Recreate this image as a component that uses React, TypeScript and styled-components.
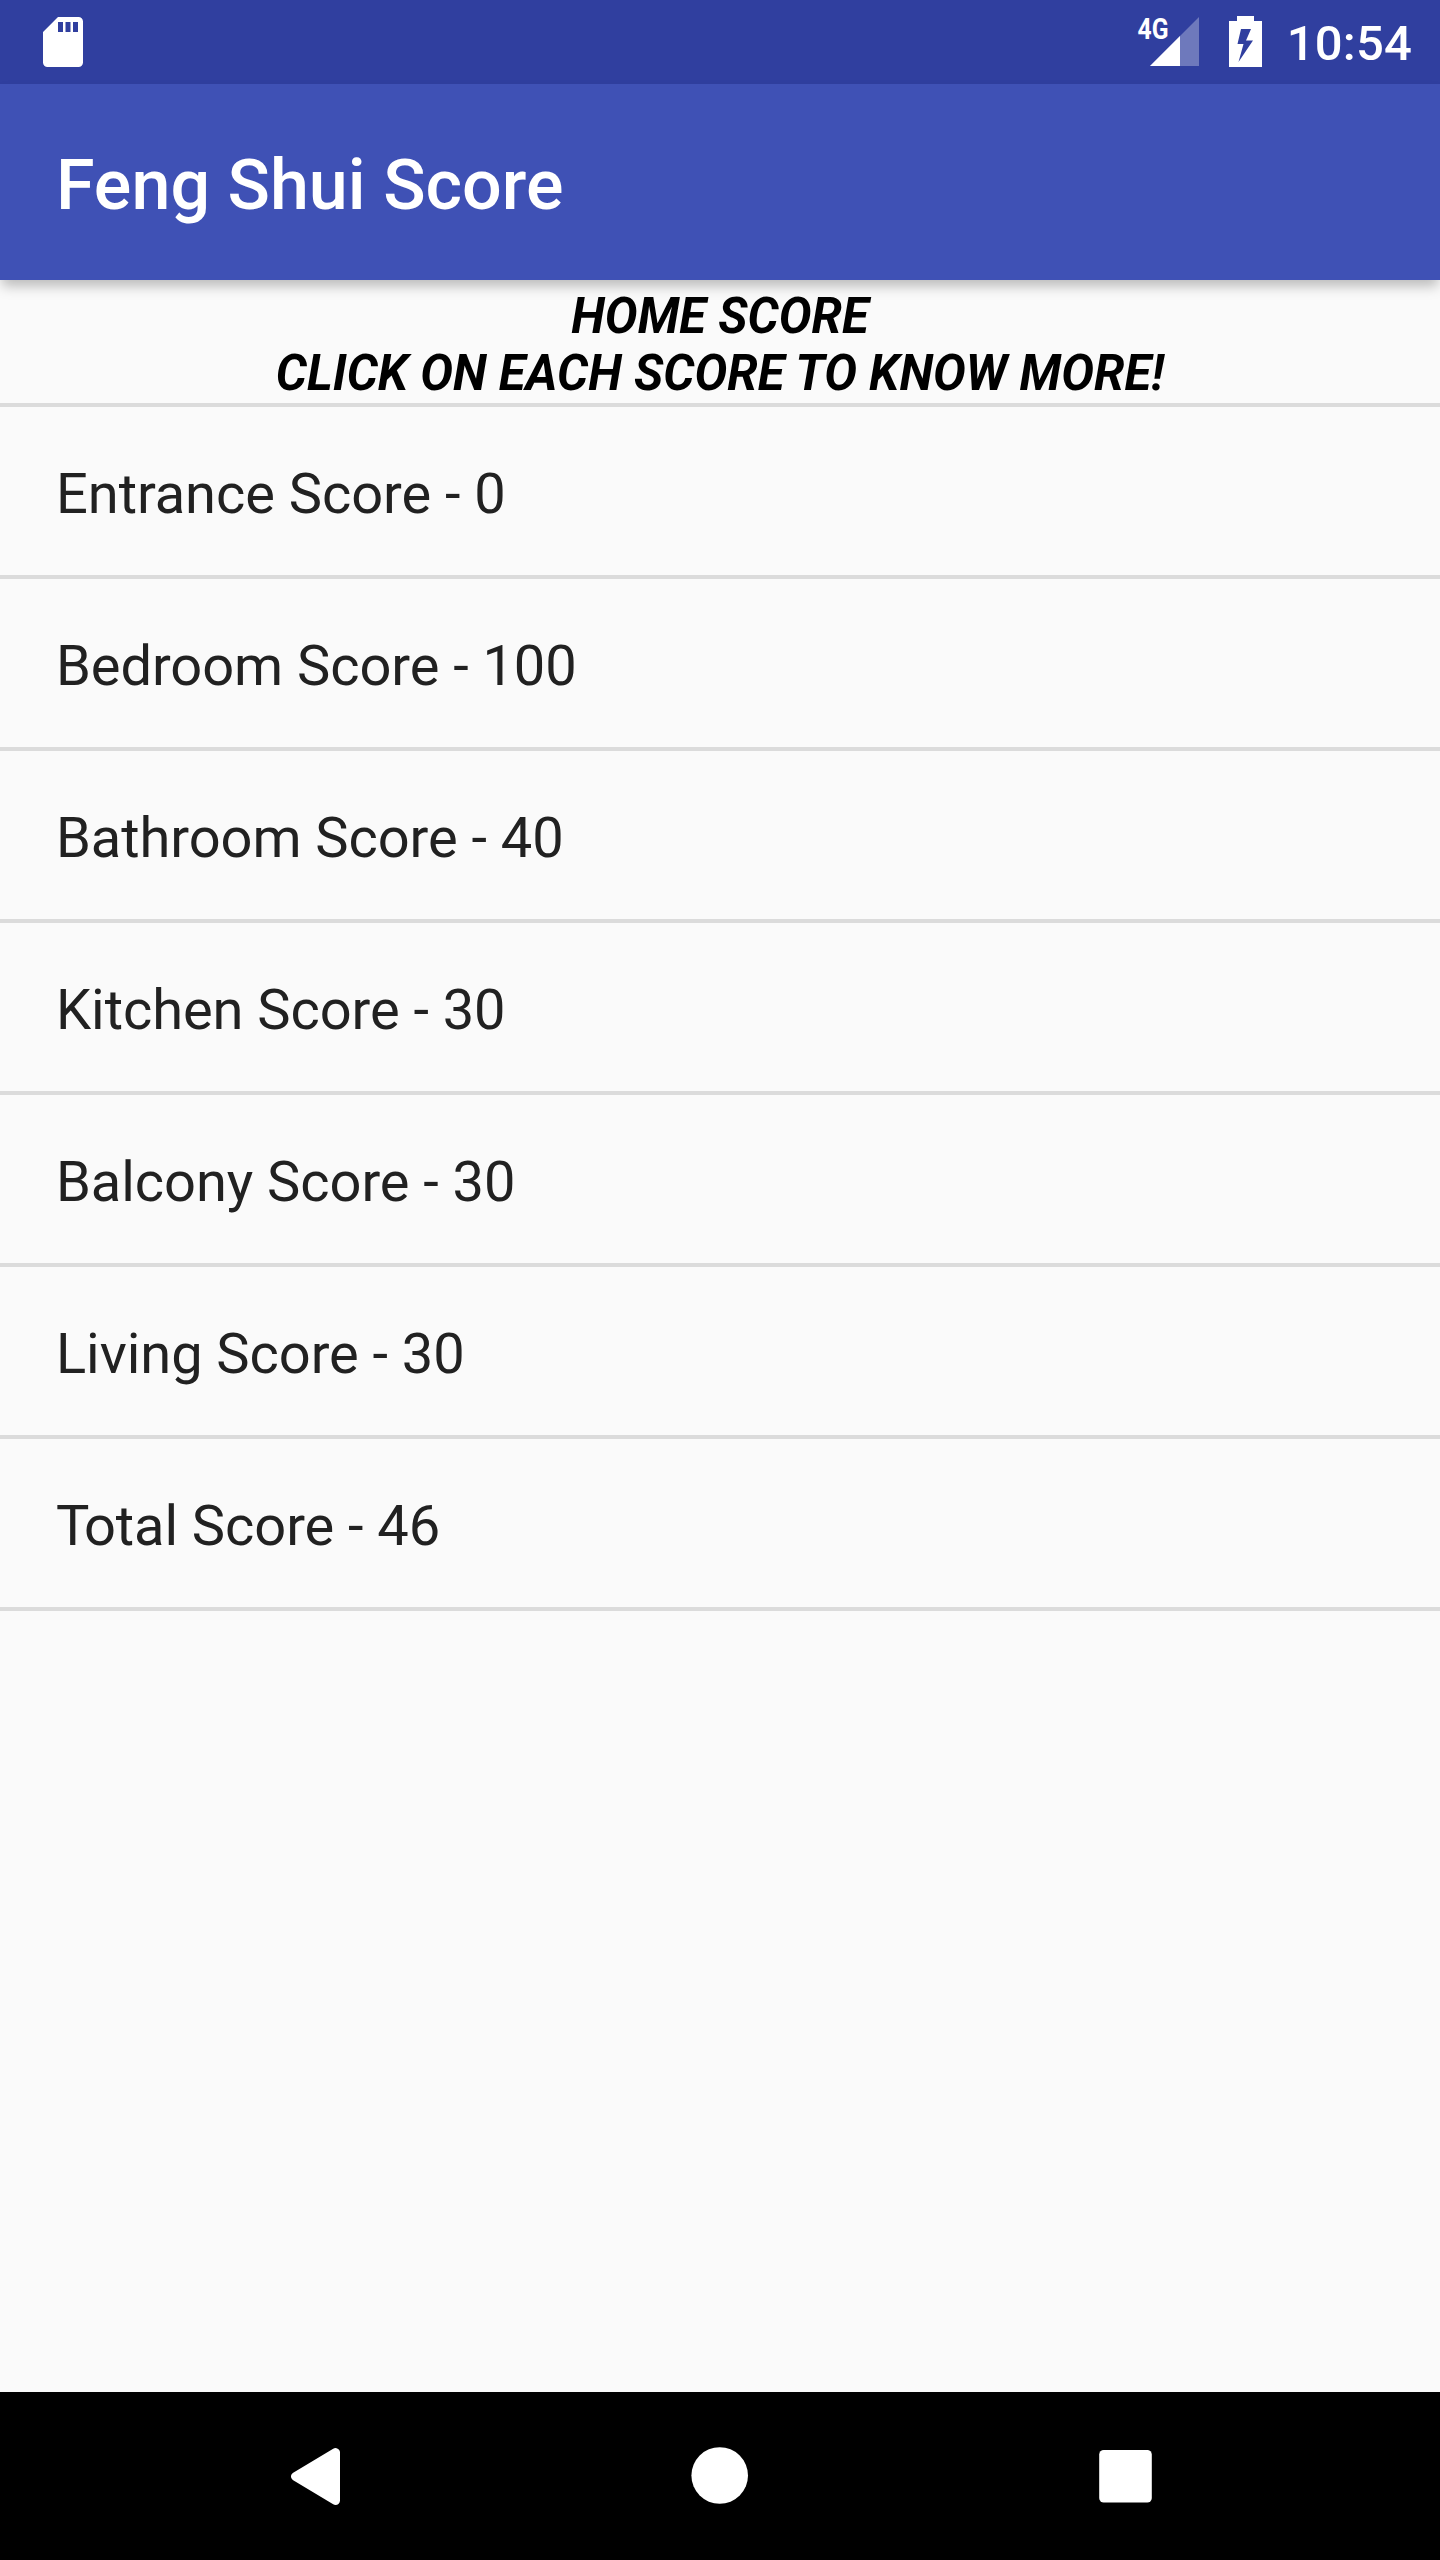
import React from "react";
import styled, { createGlobalStyle } from "styled-components";

const GlobalStyle = createGlobalStyle`
  html, body { margin: 0; padding: 0; background: #fafafa; }
  * { box-sizing: border-box; }
`;

const Screen = styled.div`
  display: flex;
  flex-direction: column;
  width: 1440px;
  height: 2560px;
  overflow: hidden;
  background: #fafafa;
  font-family: Roboto, "Noto Sans", sans-serif;
`;

const StatusBar = styled.div`
  display: flex;
  align-items: center;
  flex: none;
  height: 84px;
  padding: 0 28px 0 43px;
  background: #303f9f;
  color: #fff;
`;

const StatusIcon = styled.svg<{ $gap?: number }>`
  display: block;
  flex: none;
  margin-right: ${(p) => p.$gap ?? 0}px;
`;

const Spacer = styled.div`
  flex: 1;
`;

const Clock = styled.div`
  width: 126px;
  padding-top: 3px;
  font-size: 49px;
  font-weight: 500;
  letter-spacing: 0.2px;
  line-height: 57px;
  text-align: right;
  white-space: nowrap;
`;

const AppBar = styled.header`
  position: relative;
  z-index: 1;
  display: flex;
  align-items: center;
  flex: none;
  height: 196px;
  padding: 5px 56px 0;
  background: #3f51b5;
  box-shadow: 0 8px 12px -2px rgba(0, 0, 0, 0.26);
`;

const Title = styled.h1`
  margin: 0;
  color: #fff;
  font-size: 70px;
  font-weight: 500;
  letter-spacing: 0.03px;
  line-height: 82px;
`;

const ListHeader = styled.div`
  flex: none;
  height: 127px;
  padding-top: 8px;
  border-bottom: 4px solid #dbdbdb;
  color: #000;
  font-size: 49px;
  font-style: italic;
  font-weight: 700;
  letter-spacing: 0.05px;
  line-height: 57px;
  text-align: center;
`;

const List = styled.ul`
  flex: 1;
  margin: 0;
  padding: 0;
  list-style: none;
`;

const Row = styled.li`
  height: 172px;
  padding: 54px 56px 0;
  border-bottom: 4px solid #dbdbdb;
  color: #212121;
  font-size: 56px;
  letter-spacing: -0.06px;
  line-height: 66px;

  &:last-child::first-letter {
    letter-spacing: -5.5px;
  }
`;

const NavBar = styled.nav`
  display: flex;
  align-items: center;
  justify-content: center;
  flex: none;
  height: 168px;
  background: #000;
`;

const NavButton = styled.button`
  display: flex;
  align-items: center;
  justify-content: center;
  width: 405px;
  height: 168px;
  padding: 0;
  border: 0;
  background: transparent;
`;

const scores = [
  { room: "Entrance", value: 0 },
  { room: "Bedroom", value: 100 },
  { room: "Bathroom", value: 40 },
  { room: "Kitchen", value: 30 },
  { room: "Balcony", value: 30 },
  { room: "Living", value: 30 },
  { room: "Total", value: 46 },
];

const SdCard = () => (
  <StatusIcon width="40" height="50" viewBox="0 0 40 50">
    <path
      fill="#fff"
      fillRule="evenodd"
      d="M15 0H35.5A4.5 4.5 0 0 1 40 4.5V45.5A4.5 4.5 0 0 1 35.5 50H4.5A4.5 4.5 0 0 1 0 45.5V15ZM15 5V15H20V5ZM22.5 5V15H27.5V5ZM30 5V15H35V5Z"
    />
  </StatusIcon>
);

const Signal = () => (
  <StatusIcon $gap={29} width="66" height="70" viewBox="-4 -10 66 70">
    <path fill="#fff" fillOpacity="0.3" d="M61 0V49H12Z" />
    <path fill="#fff" d="M42 19V49H12Z" />
    <text
      x="-0.5"
      y="22"
      fill="#fff"
      fontFamily="Roboto, sans-serif"
      fontSize="29"
      fontWeight="700"
      textLength="31"
      lengthAdjust="spacingAndGlyphs"
    >
      4G
    </text>
  </StatusIcon>
);

const Battery = () => (
  <StatusIcon $gap={24} width="33" height="52" viewBox="0 0 33 52">
    <path
      fill="#fff"
      fillRule="evenodd"
      d="M8 0H25V5H33V51H0V5H8ZM12 13L8.5 28H14.5L9.5 46L24 24.5H17L22 13Z"
    />
  </StatusIcon>
);

export default function App() {
  return (
    <>
      <GlobalStyle />
      <Screen>
        <StatusBar>
          <SdCard />
          <Spacer />
          <Signal />
          <Battery />
          <Clock>10:54</Clock>
        </StatusBar>
        <AppBar>
          <Title>Feng Shui Score</Title>
        </AppBar>
        <ListHeader>
          HOME SCORE
          <br />
          CLICK ON EACH SCORE TO KNOW MORE!
        </ListHeader>
        <List>
          {scores.map((s) => (
            <Row key={s.room}>
              {s.room} Score - {s.value}
            </Row>
          ))}
        </List>
        <NavBar>
          <NavButton aria-label="Back">
            <svg width="58" height="58" viewBox="0 0 58 58">
              <path
                fill="#fff"
                stroke="#fff"
                strokeWidth="9"
                strokeLinejoin="round"
                d="M9.5 29.5L49.5 5.5V53.5Z"
              />
            </svg>
          </NavButton>
          <NavButton aria-label="Home">
            <svg width="58" height="58" viewBox="0 0 58 58">
              <circle cx="28.7" cy="28.5" r="28.3" fill="#fff" />
            </svg>
          </NavButton>
          <NavButton aria-label="Recent apps">
            <svg width="56" height="54" viewBox="0 0 56 54">
              <rect x="2.2" y="1" width="52.6" height="52.6" rx="4.5" fill="#fff" />
            </svg>
          </NavButton>
        </NavBar>
      </Screen>
    </>
  );
}
